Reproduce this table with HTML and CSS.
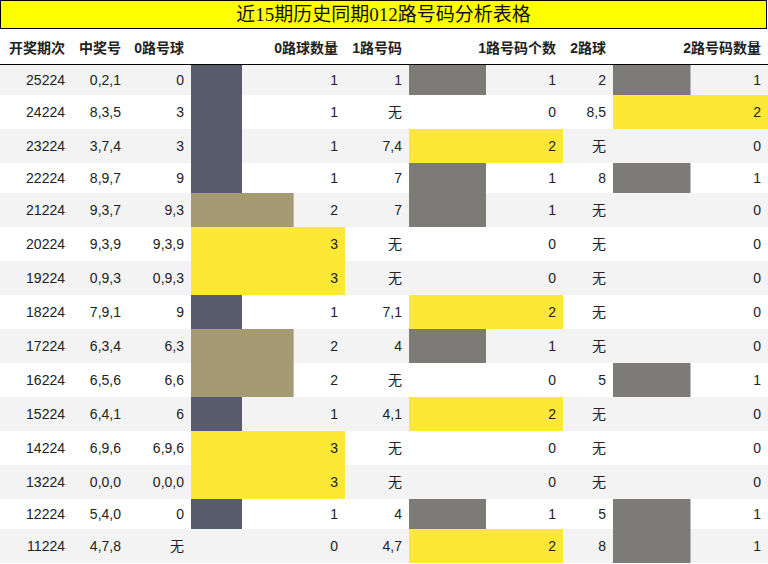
FILE: index.html
```html
<!DOCTYPE html>
<html lang="zh">
<head>
<meta charset="utf-8">
<title>近15期历史同期012路号码分析表格</title>
<link rel="stylesheet" href="styles.css">
</head>
<body>
<div class="title">近15期历史同期012路号码分析表格</div>
<table class="grid">
<colgroup>
<col class="c1"><col class="c2"><col class="c3"><col class="c4"><col class="c5"><col class="c6"><col class="c7"><col class="c8">
</colgroup>
<thead>
<tr><th>开奖期次</th><th>中奖号</th><th>0路号球</th><th>0路球数量</th><th>1路号码</th><th>1路号码个数</th><th>2路球</th><th>2路号码数量</th></tr>
</thead>
<tbody>
<tr class="s"><td>25224</td><td>0,2,1</td><td>0</td><td class="bar b-slate" style="background-size:33.33% 100%">1</td><td>1</td><td class="bar b-gray" style="background-size:50% 100%">1</td><td>2</td><td class="bar b-gray" style="background-size:50% 100%">1</td></tr>
<tr class="t"><td>24224</td><td>8,3,5</td><td>3</td><td class="bar b-slate" style="background-size:33.33% 100%">1</td><td>无</td><td>0</td><td>8,5</td><td class="bar b-yellow" style="background-size:100% 100%">2</td></tr>
<tr class="t"><td>23224</td><td>3,7,4</td><td>3</td><td class="bar b-slate" style="background-size:33.33% 100%">1</td><td>7,4</td><td class="bar b-yellow" style="background-size:100% 100%">2</td><td>无</td><td>0</td></tr>
<tr class="s"><td>22224</td><td>8,9,7</td><td>9</td><td class="bar b-slate" style="background-size:33.33% 100%">1</td><td>7</td><td class="bar b-gray" style="background-size:50% 100%">1</td><td>8</td><td class="bar b-gray" style="background-size:50% 100%">1</td></tr>
<tr class="t"><td>21224</td><td>9,3,7</td><td>9,3</td><td class="bar b-khaki" style="background-size:66.67% 100%">2</td><td>7</td><td class="bar b-gray" style="background-size:50% 100%">1</td><td>无</td><td>0</td></tr>
<tr class="t"><td>20224</td><td>9,3,9</td><td>9,3,9</td><td class="bar b-yellow" style="background-size:100% 100%">3</td><td>无</td><td>0</td><td>无</td><td>0</td></tr>
<tr class="t"><td>19224</td><td>0,9,3</td><td>0,9,3</td><td class="bar b-yellow" style="background-size:100% 100%">3</td><td>无</td><td>0</td><td>无</td><td>0</td></tr>
<tr class="t"><td>18224</td><td>7,9,1</td><td>9</td><td class="bar b-slate" style="background-size:33.33% 100%">1</td><td>7,1</td><td class="bar b-yellow" style="background-size:100% 100%">2</td><td>无</td><td>0</td></tr>
<tr class="t"><td>17224</td><td>6,3,4</td><td>6,3</td><td class="bar b-khaki" style="background-size:66.67% 100%">2</td><td>4</td><td class="bar b-gray" style="background-size:50% 100%">1</td><td>无</td><td>0</td></tr>
<tr class="t"><td>16224</td><td>6,5,6</td><td>6,6</td><td class="bar b-khaki" style="background-size:66.67% 100%">2</td><td>无</td><td>0</td><td>5</td><td class="bar b-gray" style="background-size:50% 100%">1</td></tr>
<tr class="t"><td>15224</td><td>6,4,1</td><td>6</td><td class="bar b-slate" style="background-size:33.33% 100%">1</td><td>4,1</td><td class="bar b-yellow" style="background-size:100% 100%">2</td><td>无</td><td>0</td></tr>
<tr class="t"><td>14224</td><td>6,9,6</td><td>6,9,6</td><td class="bar b-yellow" style="background-size:100% 100%">3</td><td>无</td><td>0</td><td>无</td><td>0</td></tr>
<tr class="t"><td>13224</td><td>0,0,0</td><td>0,0,0</td><td class="bar b-yellow" style="background-size:100% 100%">3</td><td>无</td><td>0</td><td>无</td><td>0</td></tr>
<tr class="s"><td>12224</td><td>5,4,0</td><td>0</td><td class="bar b-slate" style="background-size:33.33% 100%">1</td><td>4</td><td class="bar b-gray" style="background-size:50% 100%">1</td><td>5</td><td class="bar b-gray" style="background-size:50% 100%">1</td></tr>
<tr class="t"><td>11224</td><td>4,7,8</td><td>无</td><td>0</td><td>4,7</td><td class="bar b-yellow" style="background-size:100% 100%">2</td><td>8</td><td class="bar b-gray" style="background-size:50% 100%">1</td></tr>
</tbody>
</table>
</body>
</html>
```
FILE: styles.css
```css
html, body {
  margin: 0;
  padding: 0;
  background: #fff;
}
body {
  font-family: "Liberation Sans", "Noto Sans CJK SC", sans-serif;
  color: #222;
  width: 768px;
  overflow: hidden;
}
.title {
  box-sizing: border-box;
  width: 767px;
  height: 29px;
  border: 1px solid #000;
  background: #ffff00;
  color: #111;
  font-family: "Liberation Serif", "Noto Sans CJK SC", serif;
  font-size: 19px;
  line-height: 28px;
  text-align: center;
}
.grid {
  width: 768px;
  table-layout: fixed;
  border-collapse: collapse;
  border-spacing: 0;
}
.c1 { width: 72px; }
.c2 { width: 56px; }
.c3 { width: 63px; }
.c4 { width: 154px; }
.c5 { width: 64px; }
.c6 { width: 154px; }
.c7 { width: 50px; }
.c8 { width: 155px; }
.grid th {
  height: 35px;
  padding: 0 7px 0 0;
  text-align: right;
  font-size: 14px;
  font-weight: bold;
  color: #222;
  font-family: "Liberation Sans", "Noto Sans CJK SC", sans-serif;
  border-bottom: 1px solid #000;
  white-space: nowrap;
  vertical-align: middle;
}
.grid td {
  padding: 0 7px 0 0;
  text-align: right;
  font-size: 14px;
  vertical-align: middle;
  white-space: nowrap;
  line-height: 16px;
}
.grid tr.s td { height: 30px; }
.grid tr.t td { height: 34px; }
.grid tbody tr:nth-child(odd) { background: #f3f3f3; }
.grid tbody tr:nth-child(even) { background: #fff; }
.bar {
  background-repeat: no-repeat;
  background-position: left top;
}
.b-slate { background-image: linear-gradient(#575c6b, #575c6b); }
.b-khaki { background-image: linear-gradient(#a49b74, #a49b74); }
.b-yellow { background-image: linear-gradient(#fde835, #fde835); }
.b-gray { background-image: linear-gradient(#7d7b77, #7d7b77); }
```
